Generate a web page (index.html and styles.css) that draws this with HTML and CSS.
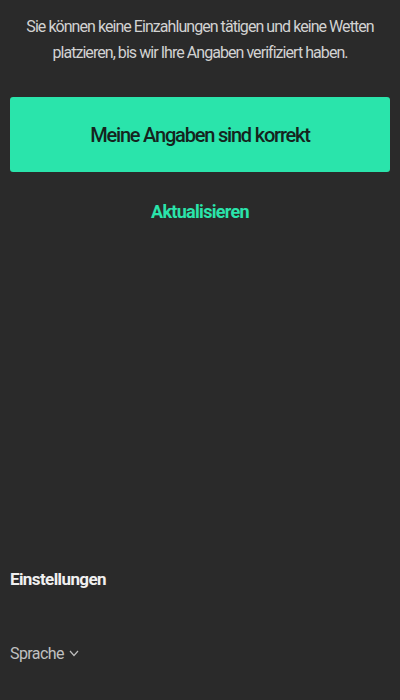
FILE: index.html
```html
<!DOCTYPE html>
<html lang="de">
<head>
    <meta charset="UTF-8">
    <title>Angaben bestätigen</title>
    <link rel="stylesheet" href="styles.css">
</head>
<body>
    <div class="screen">
        <p class="notice">Sie können keine Einzahlungen tätigen und keine Wetten platzieren, bis wir Ihre Angaben verifiziert haben.</p>
        <button class="confirm-btn">Meine Angaben sind korrekt</button>
        <a class="update-link" href="#">Aktualisieren</a>

        <div class="settings">
            <div class="settings-title">Einstellungen</div>
            <div class="language">
                Sprache
                <svg class="chevron" width="10" height="7" viewBox="0 0 10 7">
                    <path d="M1 1 L5 5.5 L9 1" fill="none" stroke="#bdbdbd" stroke-width="1.2"/>
                </svg>
            </div>
        </div>
    </div>
</body>
</html>
```

FILE: styles.css
```css
html, body {
    margin: 0;
    padding: 0;
    background-color: #2a2a2a;
}
body {
    font-family: Roboto, "Liberation Sans", sans-serif;
}
.screen {
    height: 700px;
    padding: 0 10px;
    box-sizing: border-box;
    display: flex;
    flex-direction: column;
    overflow: hidden;
}
.notice {
    margin: 14px 0 0;
    color: #d2d2d2;
    font-size: 16px;
    line-height: 26px;
    text-align: center;
    letter-spacing: -0.95px;
}
.confirm-btn {
    margin-top: 31px;
    height: 75px;
    width: 100%;
    border: none;
    border-radius: 3px;
    background: #2ae4ab;
    color: #15241e;
    font-family: inherit;
    font-size: 20px;
    font-weight: 500;
    letter-spacing: -1.2px;
}
.update-link {
    margin-top: 29px;
    color: #2ae4ab;
    font-size: 18px;
    font-weight: bold;
    text-align: center;
    text-decoration: none;
    letter-spacing: -0.7px;
}
.settings {
    margin-top: auto;
    padding-bottom: 37px;
}
.settings-title {
    color: #f0f0f0;
    font-size: 17px;
    font-weight: bold;
    letter-spacing: -0.6px;
}
.language {
    margin-top: 55px;
    color: #c0c0c0;
    font-size: 16px;
    letter-spacing: -0.6px;
    display: flex;
    align-items: center;
    gap: 5px;
}
```
